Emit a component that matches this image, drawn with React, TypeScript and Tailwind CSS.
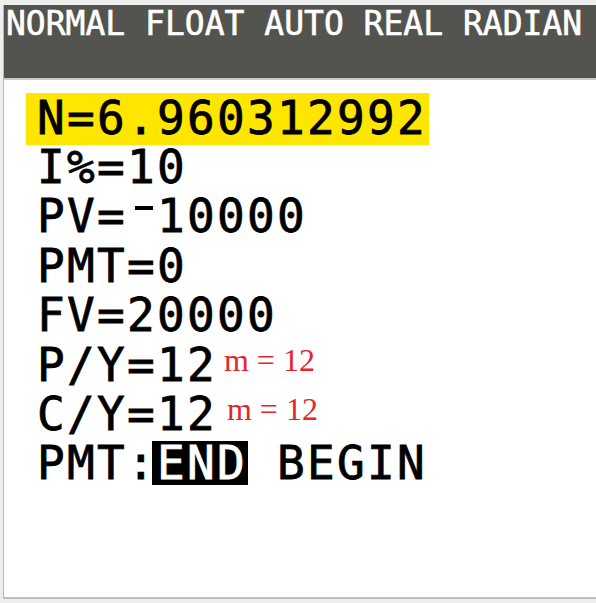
import React from "react";

const mono = "font-['DejaVu_Sans_Mono','Liberation_Mono',monospace]";

function Note({ shift }: { shift: string }) {
  return (
    <span
      className={`${shift} align-[10px] font-['Liberation_Serif','Times_New_Roman',serif] text-[32px] leading-none tracking-normal text-[#e4252b] [-webkit-text-stroke:0px]`}
    >
      m = 12
    </span>
  );
}

// calculator's raised negative sign
function Neg() {
  return (
    <span className="inline-block w-[30px] h-[4px] align-[22px]">
      <span className="block ml-[8px] w-[18px] h-full bg-black" />
    </span>
  );
}

export default function App() {
  return (
    <div className="w-[596px] h-[603px] overflow-hidden bg-[#eeeeee] pt-[5px] pl-[3px]">
      <div className="h-[592px] border-l border-[#b8b8b8] bg-white flex flex-col">
        {/* mode bar */}
        <div
          className={`h-[73px] bg-[#535450] pt-[2px] pl-[2px] ${mono} text-[33px] leading-[33px] text-white whitespace-nowrap [-webkit-text-stroke:0.6px_white]`}
        >
          NORMAL FLOAT AUTO REAL RADIAN
        </div>
        <div className="h-[2px] bg-[#c9c9c9]" />

        {/* TVM solver */}
        <div
          className={`pt-[14px] pl-[33px] ${mono} text-[46px] leading-[49.4px] tracking-[2.3px] text-black whitespace-nowrap [-webkit-text-stroke:0.8px_black]`}
        >
          <div>
            <span className="inline-block -ml-[11px] pl-[11px] pr-[2px] -mt-[3px] pt-[1px] pb-[2px] leading-[49px] bg-[#ffe600]">
              N=6.960312992
            </span>
          </div>
          <div className="-mt-[2px]">I%=10</div>
          <div>
            PV=<Neg />10000
          </div>
          <div>PMT=0</div>
          <div>FV=20000</div>
          <div>
            P/Y=12<Note shift="ml-[7px]" />
          </div>
          <div>
            C/Y=12<Note shift="ml-[10px]" />
          </div>
          <div>
            PMT:
            <span className="inline-block h-[44px] leading-[44px] bg-black text-white [-webkit-text-stroke:0.8px_white] -ml-[5px] pl-[5px] pr-[1px] -mr-[1px]">
              END
            </span>{" "}
            BEGIN
          </div>
        </div>
      </div>
      <div className="h-[2px] bg-[#bdbdbd]" />
    </div>
  );
}
